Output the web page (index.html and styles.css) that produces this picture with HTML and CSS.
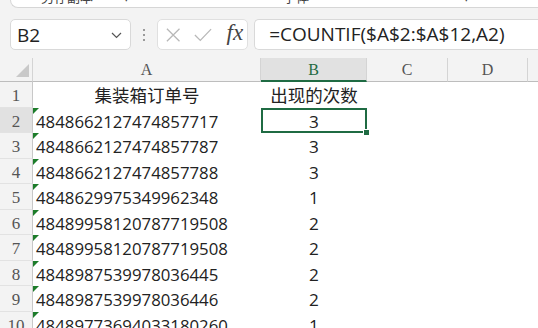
FILE: index.html
```html
<!DOCTYPE html>
<html>
<head>
<meta charset="utf-8">
<link rel="stylesheet" href="styles.css">
</head>
<body>
<div class="topstrip">
  <span class="ts t1">另存副本</span><span class="ts t2">▾</span><span class="ts t3">字体</span><span class="ts t4">▾</span>
</div>
<div class="fbar">
  <div class="namebox">
    <span class="nb-text">B2</span>
    <svg class="chev" width="11" height="7" viewBox="0 0 11 7"><polyline points="1,1 5.5,5.5 10,1" fill="none" stroke="#555" stroke-width="1.2"/></svg>
  </div>
  <div class="dots"><i></i><i></i><i></i></div>
  <div class="fxbox">
    <svg width="16" height="16" viewBox="0 0 16 16"><path d="M1 1 L15 15 M15 1 L1 15" stroke="#b8b8b8" stroke-width="1.4" fill="none"/></svg>
    <svg width="20" height="16" viewBox="0 0 20 16"><polyline points="1,8 7,14 19,1.5" fill="none" stroke="#b8b8b8" stroke-width="1.4"/></svg>
    <span class="fx">fx</span>
  </div>
  <div class="formula">=COUNTIF($A$2:$A$12,A2)</div>
</div>
<div class="sheet">
  <div class="corner"><svg width="13" height="13" viewBox="0 0 13 13"><polygon points="13,0 13,13 0,13" fill="#c9c9c9"/></svg></div>
  <div class="ch">A</div>
  <div class="ch sel">B</div>
  <div class="ch">C</div>
  <div class="ch">D</div>
  <div class="ch last"></div>

  <div class="rh">1</div>
  <div class="c ctr zh">集装箱订单号</div>
  <div class="c ctr zh">出现的次数</div>
  <div class="c"></div><div class="c"></div><div class="c"></div>

  <div class="rh sel">2</div>
  <div class="c txt">4848662127474857717</div>
  <div class="c ctr active">3<span class="handle"></span></div>
  <div class="c"></div><div class="c"></div><div class="c"></div>

  <div class="rh">3</div>
  <div class="c txt">4848662127474857787</div>
  <div class="c ctr">3</div>
  <div class="c"></div><div class="c"></div><div class="c"></div>

  <div class="rh">4</div>
  <div class="c txt">4848662127474857788</div>
  <div class="c ctr">3</div>
  <div class="c"></div><div class="c"></div><div class="c"></div>

  <div class="rh">5</div>
  <div class="c txt">4848629975349962348</div>
  <div class="c ctr">1</div>
  <div class="c"></div><div class="c"></div><div class="c"></div>

  <div class="rh">6</div>
  <div class="c txt">48489958120787719508</div>
  <div class="c ctr">2</div>
  <div class="c"></div><div class="c"></div><div class="c"></div>

  <div class="rh">7</div>
  <div class="c txt">48489958120787719508</div>
  <div class="c ctr">2</div>
  <div class="c"></div><div class="c"></div><div class="c"></div>

  <div class="rh">8</div>
  <div class="c txt">4848987539978036445</div>
  <div class="c ctr">2</div>
  <div class="c"></div><div class="c"></div><div class="c"></div>

  <div class="rh">9</div>
  <div class="c txt">4848987539978036446</div>
  <div class="c ctr">2</div>
  <div class="c"></div><div class="c"></div><div class="c"></div>

  <div class="rh">10</div>
  <div class="c txt">48489773694033180260</div>
  <div class="c ctr">1</div>
  <div class="c"></div><div class="c"></div><div class="c"></div>
</div>
</body>
</html>
```
FILE: styles.css
```css
html, body {
  margin: 0;
  padding: 0;
  width: 538px;
  height: 328px;
  overflow: hidden;
  background: #f3f3f3;
  font-family: "Liberation Sans", "Noto Sans CJK SC", sans-serif;
}
.topstrip {
  height: 7px;
  margin-left: 10px;
  background: #ffffff;
  border-bottom: 1px solid #d6d6d6;
  border-left: 1px solid #d6d6d6;
  border-bottom-left-radius: 8px;
  position: relative;
  overflow: hidden;
}
.ts {
  position: absolute;
  top: -10px;
  font-size: 13px;
  line-height: 14px;
  color: #444;
  font-family: "Noto Sans CJK SC", sans-serif;
}
.t1 { left: 30px; }
.t2 { left: 112px; }
.t3 { left: 272px; }
.t4 { left: 452px; }
.fbar {
  display: flex;
  align-items: center;
  padding: 11px 0 0 10px;
  height: 31px;
  white-space: nowrap;
}
.namebox {
  box-sizing: border-box;
  width: 127px;
  height: 31px;
  background: #fff;
  border: 1px solid #d9d9d9;
  border-radius: 5px;
  display: flex;
  align-items: center;
  justify-content: space-between;
  padding: 0 8px 0 6px;
}
.nb-text {
  font-family: "Open Sans", "Liberation Sans", sans-serif;
  font-size: 19px;
  color: #222;
}
.chev { margin-top: 2px; }
.dots {
  width: 28px;
  display: flex;
  flex-direction: column;
  align-items: center;
  gap: 3px;
}
.dots i {
  display: block;
  width: 2px;
  height: 2px;
  background: #9a9a9a;
}
.fxbox {
  box-sizing: border-box;
  width: 91px;
  height: 31px;
  background: #fff;
  border: 1px solid #e0e0e0;
  border-radius: 5px;
  display: flex;
  align-items: center;
  padding: 0 4px 0 8px;
  gap: 13px;
}
.fx {
  font-family: "Liberation Serif", serif;
  font-style: italic;
  font-size: 23px;
  color: #444;
  margin-top: -3px;
  margin-left: 2px;
}
.formula {
  box-sizing: border-box;
  margin-left: 6px;
  width: 300px;
  height: 31px;
  background: #fff;
  border: 1px solid #d9d9d9;
  border-right: none;
  border-radius: 5px 0 0 5px;
  padding-left: 14px;
  font-family: "Open Sans", "Liberation Sans", sans-serif;
  font-size: 19px;
  line-height: 29px;
  color: #222;
}
.sheet {
  margin-top: 8px;
  display: grid;
  grid-template-columns: 33px 228px 106px 81px 80px 20px;
  grid-template-rows: 24px repeat(10, 25.5px);
  background: #fff;
}
.corner {
  background: #f3f3f3;
  border-right: 1px solid #d4d4d4;
  border-bottom: 1px solid #bdbdbd;
  display: flex;
  align-items: flex-end;
  justify-content: flex-end;
  padding: 0 3px 4px 0;
}
.ch {
  background: #f3f3f3;
  border-right: 1px solid #d4d4d4;
  border-bottom: 1px solid #bdbdbd;
  font-family: "Liberation Serif", "DejaVu Serif", serif;
  font-size: 16px;
  color: #555;
  text-align: center;
  line-height: 24px;
}
.ch.sel {
  background: #e1e1e1;
  border-bottom: 2px solid #1f6b43;
  color: #1f6b43;
}
.ch.last { border-right: none; }
.rh {
  background: #f3f3f3;
  border-right: 1px solid #c8c8c8;
  border-bottom: 1px solid #e2e2e2;
  font-family: "Liberation Serif", "DejaVu Serif", serif;
  font-size: 17px;
  color: #555;
  text-align: center;
  line-height: 28px;
  overflow: hidden;
}
.rh.sel { background: #e1e1e1; }
.c {
  position: relative;
  font-size: 17.2px;
  color: #222;
  line-height: 27px;
  white-space: nowrap;
  overflow: visible;
}
.c.ctr { text-align: center; }
.c.zh {
  font-family: "Noto Sans CJK SC", sans-serif;
  font-size: 17.5px;
  line-height: 25px;
  color: #222;
}
.c.txt {
  padding-left: 3px;
  font-family: "Open Sans", "Liberation Sans", sans-serif;
  font-size: 16.8px;
}
.c.txt::before {
  content: "";
  position: absolute;
  left: 0;
  top: 0;
  border-top: 6px solid #1c7c2a;
  border-right: 6px solid transparent;
}
.c.ctr:not(.zh) {
  font-family: "Open Sans", "Liberation Sans", sans-serif;
}
.c.active {
  box-shadow: inset 0 0 0 2px #1f6b43;
}
.handle {
  position: absolute;
  right: -3px;
  bottom: -3px;
  width: 5px;
  height: 5px;
  background: #1f6b43;
  border: 1px solid #fff;
}
```
